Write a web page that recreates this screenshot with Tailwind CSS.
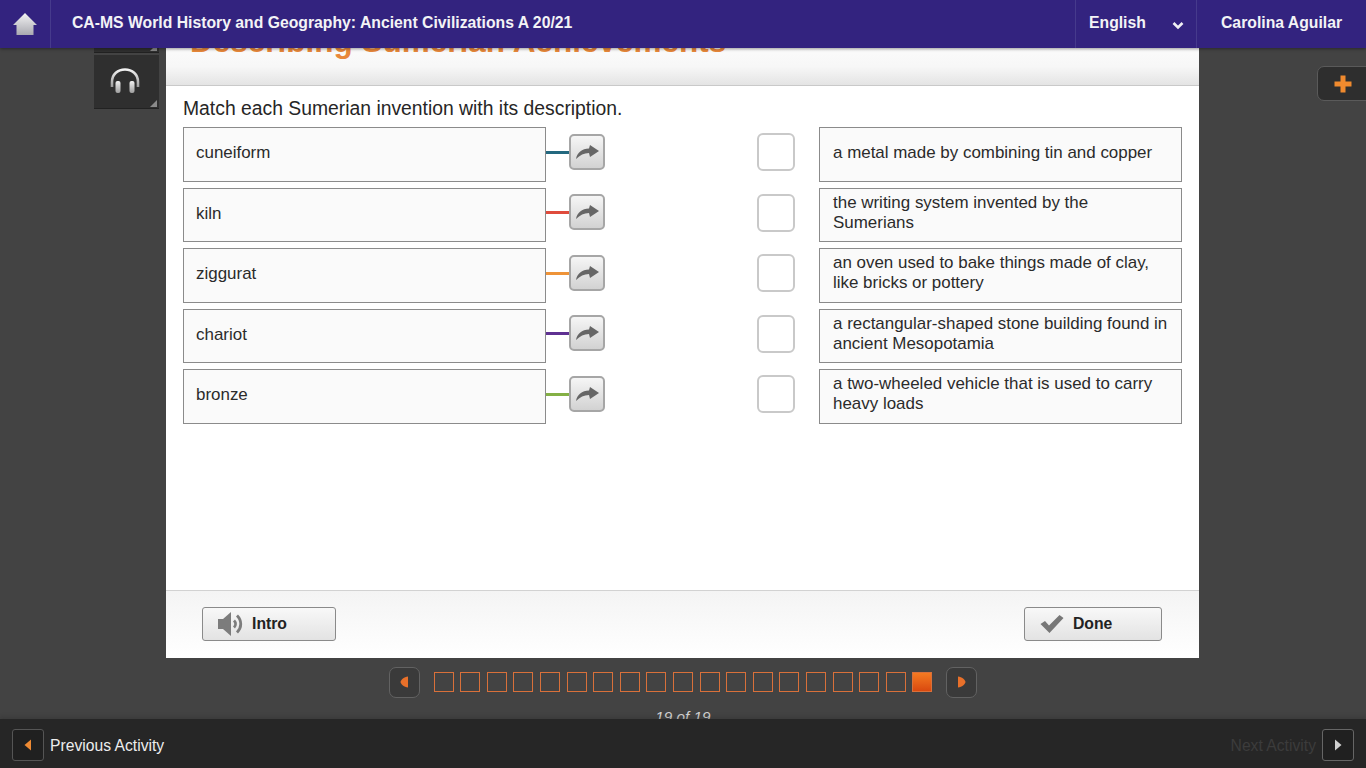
<!DOCTYPE html>
<html>
<head>
<meta charset="utf-8">
<script src="https://cdn.jsdelivr.net/npm/@tailwindcss/browser@4"></script>
</head>
<body class="m-0">
<div class="relative flex flex-col w-[1366px] h-[768px] overflow-hidden bg-[#434343] font-['Liberation_Sans',Arial,sans-serif]">

  <!-- top bar -->
  <header class="relative z-20 flex items-stretch h-[48px] shrink-0 bg-[#33237f] text-white shadow-[0_1px_3px_rgba(0,0,0,0.4)]">
    <div class="flex items-center justify-center w-[51px] border-r border-[#463a8c]">
      <svg width="26" height="26" viewBox="0 0 26 26"><defs><linearGradient id="h" x1="0" y1="0" x2="0" y2="1"><stop offset="0" stop-color="#f4f4f4"/><stop offset="1" stop-color="#a9a9b0"/></linearGradient></defs><path d="M13 2 L25 14 L21.5 14 L21.5 24 L4.5 24 L4.5 14 L1 14 Z" fill="url(#h)"/></svg>
    </div>
    <div class="flex-1 flex items-center pl-[21px] pb-[2px] text-[15.75px] font-bold text-[#f3f3f6]">CA-MS World History and Geography: Ancient Civilizations A 20/21</div>
    <div class="flex items-center w-[121px] pl-[13px] border-l border-[#463a8c] pb-[2px] text-[15.75px] font-bold text-[#f3f3f6]">
      <span>English</span>
      <svg class="ml-[26px] mt-[4px]" width="12" height="9" viewBox="0 0 12 9"><path d="M1.5 2 L6 6.5 L10.5 2" fill="none" stroke="#f0f0f4" stroke-width="2.6"/></svg>
    </div>
    <div class="flex items-center w-[170px] pl-[24px] border-l border-[#463a8c] pb-[2px] text-[15.75px] font-bold text-[#f3f3f6]">Carolina Aguilar</div>
  </header>

  <!-- side tools -->
  <div class="absolute z-10 left-[94px] top-[20px] w-[65px] h-[33px] bg-[#2f2f2f] border-b border-[#222]">
    <div class="absolute right-[2px] bottom-[1px] w-0 h-0 border-l-[7px] border-l-transparent border-b-[7px] border-b-[#8a8a8a]"></div>
  </div>
  <div class="absolute z-10 left-[94px] top-[55px] w-[65px] h-[54px] bg-[#2f2f2f] border-b border-[#222] flex items-center justify-center">
    <svg class="mb-[1px] mr-[3px]" width="32" height="28" viewBox="0 0 32 28"><defs><linearGradient id="hp" x1="0" y1="0" x2="0" y2="1"><stop offset="0" stop-color="#f2f2f2"/><stop offset="1" stop-color="#9d9d9d"/></linearGradient></defs><path d="M3 20 V15 C3 7 9 2.5 16 2.5 C23 2.5 29 7 29 15 V20" fill="none" stroke="url(#hp)" stroke-width="2.6"/><rect x="6.5" y="14" width="5" height="12" rx="2" fill="url(#hp)"/><rect x="20.5" y="14" width="5" height="12" rx="2" fill="url(#hp)"/></svg>
    <div class="absolute right-[2px] bottom-[1px] w-0 h-0 border-l-[7px] border-l-transparent border-b-[7px] border-b-[#8a8a8a]"></div>
  </div>
  <div class="absolute z-10 left-[1317px] top-[66px] w-[60px] h-[35px] rounded-[7px] bg-[#2e2e2e] border border-[#5a5a5a] pl-[16px] flex items-center">
    <svg width="18" height="18" viewBox="0 0 18 18"><path d="M6.5 0.5 H11.5 V6.5 H17.5 V11.5 H11.5 V17.5 H6.5 V11.5 H0.5 V6.5 H6.5 Z" fill="#f08a2e"/></svg>
  </div>

  <!-- main -->
  <main class="relative flex-1 flex flex-col items-center min-h-0">
    <section class="w-[1033px] h-[610px] ml-[-1px] bg-white flex flex-col shrink-0">
      <div class="h-[38px] shrink-0 pl-[24px] border-b border-[#c9c9c9] bg-gradient-to-b from-[#fbfbfb] via-[#f7f7f7] to-[#e4e4e4]">
        <div class="mt-[-24px] text-[31.5px] leading-[35px] font-bold text-[#e8883a]">Describing Sumerian Achievements</div>
      </div>

      <div class="flex-1 px-[17px] pt-[11px]">
        <p class="text-[19.33px] leading-[24px] text-[#262626]">Match each Sumerian invention with its description.</p>
        <div class="mt-[6px] grid grid-cols-[363px_23px_37px_151px_38px_24px_363px] grid-rows-[repeat(5,54.5px)] gap-y-[6px] items-start text-[16.95px] leading-[20px] text-[#2b2b2b]">

          <div class="h-full flex items-center pl-[12px] pb-[2px] border border-[#8b8b8b] bg-[#fafafa]">cuneiform</div>
          <div class="h-[3px] mt-[23.5px] bg-[#23687f]"></div>
          <div class="mt-[6.8px] flex items-center justify-center w-[36px] h-[36px] rounded-[5px] border-2 border-[#a6a6a6] bg-gradient-to-b from-[#f6f6f6] to-[#d2d2d2]"><svg width="23" height="14" viewBox="0 0 23 14"><path d="M0 14 C1 8 6 3.5 13 3.5 L14 0 L23 6 L14 12 L13 8 C8 8 4 10 0 14 Z" fill="#666"/></svg></div>
          <div></div>
          <div class="mt-[6px] w-[38px] h-[38px] rounded-[6px] border-2 border-[#c9c9c9] bg-white"></div>
          <div></div>
          <div class="h-full flex items-center pl-[13px] pr-[10px] pb-[2px] border border-[#8b8b8b] bg-[#fafafa]">a metal made by combining tin and copper</div>

          <div class="h-full flex items-center pl-[12px] pb-[2px] border border-[#8b8b8b] bg-[#fafafa]">kiln</div>
          <div class="h-[3px] mt-[23.5px] bg-[#df4b3c]"></div>
          <div class="mt-[6.8px] flex items-center justify-center w-[36px] h-[36px] rounded-[5px] border-2 border-[#a6a6a6] bg-gradient-to-b from-[#f6f6f6] to-[#d2d2d2]"><svg width="23" height="14" viewBox="0 0 23 14"><path d="M0 14 C1 8 6 3.5 13 3.5 L14 0 L23 6 L14 12 L13 8 C8 8 4 10 0 14 Z" fill="#666"/></svg></div>
          <div></div>
          <div class="mt-[6px] w-[38px] h-[38px] rounded-[6px] border-2 border-[#c9c9c9] bg-white"></div>
          <div></div>
          <div class="h-full flex items-center pl-[13px] pr-[10px] pb-[4px] border border-[#8b8b8b] bg-[#fafafa]">the writing system invented by the Sumerians</div>

          <div class="h-full flex items-center pl-[12px] pb-[2px] border border-[#8b8b8b] bg-[#fafafa]">ziggurat</div>
          <div class="h-[3px] mt-[23.5px] bg-[#ee9338]"></div>
          <div class="mt-[6.8px] flex items-center justify-center w-[36px] h-[36px] rounded-[5px] border-2 border-[#a6a6a6] bg-gradient-to-b from-[#f6f6f6] to-[#d2d2d2]"><svg width="23" height="14" viewBox="0 0 23 14"><path d="M0 14 C1 8 6 3.5 13 3.5 L14 0 L23 6 L14 12 L13 8 C8 8 4 10 0 14 Z" fill="#666"/></svg></div>
          <div></div>
          <div class="mt-[6px] w-[38px] h-[38px] rounded-[6px] border-2 border-[#c9c9c9] bg-white"></div>
          <div></div>
          <div class="h-full flex items-center pl-[13px] pr-[10px] pb-[4px] border border-[#8b8b8b] bg-[#fafafa]">an oven used to bake things made of clay, like bricks or pottery</div>

          <div class="h-full flex items-center pl-[12px] pb-[2px] border border-[#8b8b8b] bg-[#fafafa]">chariot</div>
          <div class="h-[3px] mt-[23.5px] bg-[#5f3192]"></div>
          <div class="mt-[6.8px] flex items-center justify-center w-[36px] h-[36px] rounded-[5px] border-2 border-[#a6a6a6] bg-gradient-to-b from-[#f6f6f6] to-[#d2d2d2]"><svg width="23" height="14" viewBox="0 0 23 14"><path d="M0 14 C1 8 6 3.5 13 3.5 L14 0 L23 6 L14 12 L13 8 C8 8 4 10 0 14 Z" fill="#666"/></svg></div>
          <div></div>
          <div class="mt-[6px] w-[38px] h-[38px] rounded-[6px] border-2 border-[#c9c9c9] bg-white"></div>
          <div></div>
          <div class="h-full flex items-center pl-[13px] pr-[10px] pb-[4px] border border-[#8b8b8b] bg-[#fafafa]">a rectangular-shaped stone building found in ancient Mesopotamia</div>

          <div class="h-full flex items-center pl-[12px] pb-[2px] border border-[#8b8b8b] bg-[#fafafa]">bronze</div>
          <div class="h-[3px] mt-[23.5px] bg-[#84b045]"></div>
          <div class="mt-[6.8px] flex items-center justify-center w-[36px] h-[36px] rounded-[5px] border-2 border-[#a6a6a6] bg-gradient-to-b from-[#f6f6f6] to-[#d2d2d2]"><svg width="23" height="14" viewBox="0 0 23 14"><path d="M0 14 C1 8 6 3.5 13 3.5 L14 0 L23 6 L14 12 L13 8 C8 8 4 10 0 14 Z" fill="#666"/></svg></div>
          <div></div>
          <div class="mt-[6px] w-[38px] h-[38px] rounded-[6px] border-2 border-[#c9c9c9] bg-white"></div>
          <div></div>
          <div class="h-full flex items-center pl-[13px] pr-[10px] pb-[4px] border border-[#8b8b8b] bg-[#fafafa]">a two-wheeled vehicle that is used to carry heavy loads</div>
        </div>
      </div>

      <div class="h-[68px] shrink-0 flex items-center justify-between pl-[36px] pr-[37px] pb-[1px] border-t border-[#d2d2d2] bg-gradient-to-b from-[#f4f4f4] to-white">
        <button class="flex items-center w-[134px] h-[34px] pl-[14px] rounded-[3px] border border-[#8a8a8a] bg-gradient-to-b from-[#f8f8f8] to-[#e3e3e3] text-[15.75px] font-bold text-[#222]">
          <svg width="26" height="26" viewBox="0 0 26 26"><path d="M1 8 H6 L14 1 V25 L6 18 H1 Z" fill="#7c7c7c"/><path d="M17 9.5 C19 11.5 19 14.5 17 16.5 M20 4.5 C25 9.5 25 16.5 20 21.5" fill="none" stroke="#7c7c7c" stroke-width="2.8"/></svg>
          <span class="ml-[9px]">Intro</span>
        </button>
        <button class="flex items-center w-[138px] h-[34px] pl-[15px] rounded-[3px] border border-[#8a8a8a] bg-gradient-to-b from-[#f8f8f8] to-[#e3e3e3] text-[15.75px] font-bold text-[#222]">
          <svg width="24" height="20" viewBox="0 0 24 20"><path d="M0.5 10 L5 7 L9 11.5 L19.5 1 L23.5 4 L9.5 19 Z" fill="#777"/></svg>
          <span class="ml-[9px]">Done</span>
        </button>
      </div>
    </section>

    <!-- pagination -->
    <div class="mt-[9px] flex items-center h-[30px] shrink-0">
      <div class="flex items-center justify-center w-[31px] h-[31px] rounded-[7px] border border-[#626262] bg-[#3a3a3a]">
        <svg width="9" height="12" viewBox="0 0 9 12"><path d="M8 0.5 V11.5 C4 11 1 8.5 0.5 6 C1 3.5 4 1 8 0.5 Z" fill="#e8702a"/></svg>
      </div>
      <div class="ml-[14px] flex gap-[6.6px]">
        <span class="block w-[20px] h-[20px] border border-[#d9703a]"></span>
        <span class="block w-[20px] h-[20px] border border-[#d9703a]"></span>
        <span class="block w-[20px] h-[20px] border border-[#d9703a]"></span>
        <span class="block w-[20px] h-[20px] border border-[#d9703a]"></span>
        <span class="block w-[20px] h-[20px] border border-[#d9703a]"></span>
        <span class="block w-[20px] h-[20px] border border-[#d9703a]"></span>
        <span class="block w-[20px] h-[20px] border border-[#d9703a]"></span>
        <span class="block w-[20px] h-[20px] border border-[#d9703a]"></span>
        <span class="block w-[20px] h-[20px] border border-[#d9703a]"></span>
        <span class="block w-[20px] h-[20px] border border-[#d9703a]"></span>
        <span class="block w-[20px] h-[20px] border border-[#d9703a]"></span>
        <span class="block w-[20px] h-[20px] border border-[#d9703a]"></span>
        <span class="block w-[20px] h-[20px] border border-[#d9703a]"></span>
        <span class="block w-[20px] h-[20px] border border-[#d9703a]"></span>
        <span class="block w-[20px] h-[20px] border border-[#d9703a]"></span>
        <span class="block w-[20px] h-[20px] border border-[#d9703a]"></span>
        <span class="block w-[20px] h-[20px] border border-[#d9703a]"></span>
        <span class="block w-[20px] h-[20px] border border-[#d9703a]"></span>
        <span class="block w-[20px] h-[20px] border border-[#d9703a] bg-gradient-to-b from-[#f47a21] to-[#d9480f]"></span>
      </div>
      <div class="ml-[14px] flex items-center justify-center w-[31px] h-[31px] rounded-[7px] border border-[#626262] bg-[#3a3a3a]">
        <svg width="9" height="12" viewBox="0 0 9 12"><path d="M1 0.5 V11.5 C5 11 8 8.5 8.5 6 C8 3.5 5 1 1 0.5 Z" fill="#e8702a"/></svg>
      </div>
    </div>
    <div class="mt-[8px] h-[24px] shrink-0 text-[15.3px] leading-[24px] italic text-[#d4d4d4]">19 of 19</div>
  </main>

  <!-- bottom bar -->
  <footer class="relative z-20 flex items-center justify-between h-[49px] shrink-0 px-[12px] pt-[3px] bg-[#262626] shadow-[0_-2px_4px_rgba(30,30,30,0.25)]">
    <div class="flex items-center gap-[6px]">
      <div class="flex items-center justify-center w-[32px] h-[32px] rounded-[3px] border border-[#555] bg-[#202020]">
        <svg width="8" height="12" viewBox="0 0 8 12"><path d="M7 0.5 V11.5 L0.5 6 Z" fill="#ee8a33"/></svg>
      </div>
      <span class="pt-[1px] text-[15.7px] text-[#ededed]">Previous Activity</span>
    </div>
    <div class="flex items-center gap-[6px]">
      <span class="pt-[1px] text-[15.7px] text-[#3c3c3c]">Next Activity</span>
      <div class="flex items-center justify-center w-[32px] h-[32px] rounded-[3px] border border-[#666] bg-[#202020]">
        <svg width="8" height="12" viewBox="0 0 8 12"><path d="M1 0.5 V11.5 L7.5 6 Z" fill="#cfcfcf"/></svg>
      </div>
    </div>
  </footer>
</div>
</body>
</html>
